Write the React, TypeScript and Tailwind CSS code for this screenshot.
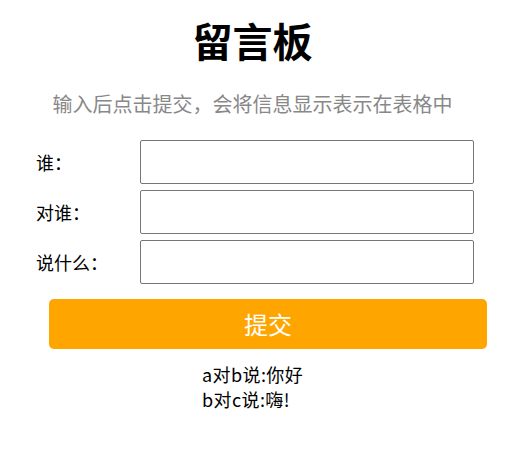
import { useState } from "react";

interface Message {
  readonly from: string;
  readonly to: string;
  readonly text: string;
}

const FONT = "font-['Microsoft_YaHei','Noto_Sans_CJK_SC',sans-serif]";

export default function App() {
  const [messages] = useState<Message[]>([
    { from: "a", to: "b", text: "你好" },
    { from: "b", to: "c", text: "嗨!" },
  ]);

  const fields = ["谁：", "对谁：", "说什么："];

  return (
    <div className={`w-[530px] h-[452px] bg-white text-black ${FONT}`}>
      <div className="w-[505px]">
        <h1 className="pt-[16px] text-center text-[40px] leading-[48px] font-bold">
          留言板
        </h1>
        <p className="mt-[26px] text-center text-[20px] leading-[28px] text-[#888888]">
          输入后点击提交，会将信息显示表示在表格中
        </p>
      </div>

      {/* form rows */}
      <div className="mt-[22px] flex flex-col gap-[6px] pl-[36px]">
        {fields.map((label) => (
          <div key={label} className="flex items-center">
            <span className="w-[104px] text-[18px] leading-[24px]">{label}</span>
            <input
              type="text"
              className="w-[334px] h-[44px] border border-[#767676] rounded-[2px] px-2 text-[18px] outline-none"
            />
          </div>
        ))}
      </div>

      <button
        type="button"
        className="mt-[15px] ml-[49px] w-[438px] h-[50px] rounded-[5px] bg-[#ffa500] text-white text-[24px] leading-[50px]"
      >
        提交
      </button>

      {/* submitted messages */}
      <div className="mt-[13px] ml-[202px] text-[18px] leading-[25px] tracking-[0.4px]">
        {messages.map((m, i) => (
          <div key={i}>
            {m.from}对{m.to}说:{m.text}
          </div>
        ))}
      </div>
    </div>
  );
}
